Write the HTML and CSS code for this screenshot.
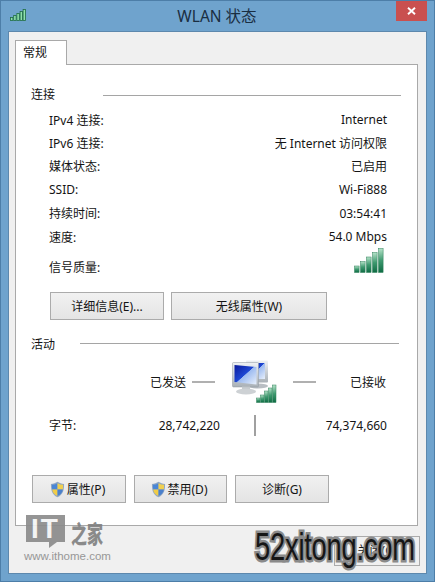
FILE: index.html
```html
<!DOCTYPE html>
<html lang="zh">
<head>
<meta charset="utf-8">
<title>WLAN 状态</title>
<link rel="stylesheet" href="styles.css">
</head>
<body>
<svg class="defs" width="0" height="0" aria-hidden="true">
  <defs>
    <linearGradient id="bar" x1="0" y1="0" x2="0" y2="1"><stop offset="0" stop-color="#b5e2c8"/><stop offset=".5" stop-color="#3f9a70"/><stop offset="1" stop-color="#0d6a42"/></linearGradient>
    <linearGradient id="screen" x1="0" y1="0" x2="1" y2="1"><stop offset="0" stop-color="#0a1a9c"/><stop offset=".48" stop-color="#1f48d4"/><stop offset=".5" stop-color="#9dbbf0"/><stop offset="1" stop-color="#e8f0fb"/></linearGradient>
    <linearGradient id="frame" x1="0" y1="0" x2="0" y2="1"><stop offset="0" stop-color="#eef1f4"/><stop offset="1" stop-color="#a9b0b6"/></linearGradient>
    <symbol id="shield" viewBox="0 0 16 18">
      <path d="M8 .7C6 2 3.6 2.800 1 3c0 6 .6 11 7 14.300C14.400 14 15 9 15 3c-2.600-.2-5-1-7-2.300z" fill="#8fa6c4"/>
      <path d="M8 2.200V9H2.300c-.2-1.500-.2-3-.2-5 2.100-.2 4.100-.8 5.900-1.800z" fill="#4a86d6"/>
      <path d="M8 2.200c1.800 1 3.800 1.600 5.900 1.800 0 2 0 3.500-.2 5H8z" fill="#f0d050"/>
      <path d="M2.300 9H8v7C4.200 14 2.800 12 2.300 9z" fill="#f0cc48"/>
      <path d="M8 9h5.700C13.200 12 11.800 14 8 16z" fill="#4a80cc"/>
    </symbol>
  </defs>
</svg>
<main class="window">
  <header class="titlebar">
    <svg class="title-icon" width="16" height="12" viewBox="0 0 16 12" aria-hidden="true">
      <g fill="#8fe0ac" stroke="#1f6b45" stroke-width=".8"><rect x=".5" y="8.500" width="2.400" height="3"/><rect x="3.700" y="6.500" width="2.400" height="5"/><rect x="6.900" y="4.500" width="2.400" height="7"/><rect x="10.100" y="2.500" width="2.400" height="9"/><rect x="13.100" y=".5" width="2.400" height="11"/></g>
    </svg>
    <h1 class="title">WLAN 状态</h1>
    <div class="close" aria-label="关闭">
      <svg width="9" height="8" viewBox="0 0 9 8" aria-hidden="true"><path d="M1 .8l7 6.400M8 .8L1 7.200" stroke="#fff" stroke-width="1.900"/></svg>
    </div>
  </header>
  <div class="client">
    <div class="tabs"><div class="tab">常规</div></div>
    <section class="panel">
      <div class="group-head head-connect"><span>连接</span><i class="rule rule-connect"></i></div>
      <div class="rows">
        <div class="row"><span>IPv4 连接:</span><span>Internet</span></div>
        <div class="row"><span>IPv6 连接:</span><span>无 Internet 访问权限</span></div>
        <div class="row"><span>媒体状态:</span><span>已启用</span></div>
        <div class="row"><span>SSID:</span><span>Wi-Fi888</span></div>
        <div class="row"><span>持续时间:</span><span>03:54:41</span></div>
        <div class="row"><span>速度:</span><span>54.0 Mbps</span></div>
        <div class="row row-signal"><span>信号质量:</span>
          <svg class="signal" width="30" height="25" viewBox="0 0 30 25" aria-hidden="true">
            <g fill="url(#bar)" stroke="#2d8059" stroke-width=".5"><rect x=".5" y="18" width="4.600" height="6.500"/><rect x="6.500" y="13.500" width="4.600" height="11"/><rect x="12.500" y="9" width="4.600" height="15.500"/><rect x="18.500" y="4.500" width="4.600" height="20"/><rect x="24.500" y=".5" width="4.600" height="24"/></g>
          </svg>
        </div>
      </div>
      <div class="actions">
        <button class="btn btn-details">详细信息(E)...</button>
        <button class="btn btn-wireless">无线属性(W)</button>
      </div>
      <div class="group-head head-activity"><span>活动</span><i class="rule rule-activity"></i></div>
      <div class="flow">
        <span class="flow-label">已发送</span><i class="dash"></i>
        <svg class="net" width="47" height="46" viewBox="0 0 47 46" aria-hidden="true">
          <rect x="14" y="1.500" width="22" height="22" rx="1" fill="url(#frame)"/>
          <rect x="17" y="4" width="16" height="16" fill="url(#screen)"/>
          <ellipse cx="26" cy="27" rx="10" ry="2.500" fill="#b9bec3"/>
          <rect x=".5" y="3.500" width="26" height="24.500" rx="1" fill="url(#frame)" stroke="#8f979e" stroke-width=".5"/>
          <path d="M2.500 6l22 2v17.500L2.500 23z" fill="url(#screen)"/>
          <rect x="10" y="27.500" width="8" height="4" fill="#c3c8cc"/>
          <ellipse cx="14" cy="32.500" rx="10" ry="3" fill="#cdd1d4"/>
          <g fill="url(#bar)" stroke="#2d8059" stroke-width=".5"><rect x="24.500" y="39" width="3.500" height="4.500"/><rect x="28.500" y="36" width="3.500" height="7.500"/><rect x="32.500" y="32" width="3.500" height="11.500"/><rect x="36.500" y="29" width="3.500" height="14.500"/><rect x="40.500" y="26" width="3.500" height="17.500"/></g>
        </svg>
        <i class="dash dash-right"></i><span class="flow-label flow-recv">已接收</span>
      </div>
      <div class="bytes">
        <span class="bytes-label">字节:</span>
        <span class="bytes-sent">28,742,220</span>
        <i class="divider"></i>
        <span class="bytes-recv">74,374,660</span>
      </div>
      <div class="actions actions-bottom">
        <button class="btn btn-props"><svg class="uac" aria-hidden="true"><use href="#shield"/></svg>属性(P)</button>
        <button class="btn btn-disable"><svg class="uac" aria-hidden="true"><use href="#shield"/></svg>禁用(D)</button>
        <button class="btn btn-diag">诊断(G)</button>
      </div>
    </section>
    <div class="footer"><div class="close-btn">关闭(C)</div></div>
  </div>
  <div class="mark-it">
    <div class="it-row"><div class="it-logo">IT<i class="it-tail"></i></div><div class="it-cn">之家</div></div>
    <div class="it-url">www.ithome.com</div>
  </div>
  <div class="mark-52">52xitong.com</div>
</main>
</body>
</html>
```
FILE: styles.css
```css
* { box-sizing: border-box; }
html, body { margin: 0; padding: 0; }
body {
  width: 435px;
  height: 582px;
  overflow: hidden;
  font-family: "Noto Sans", "Noto Sans CJK SC", sans-serif;
  font-size: 12px;
  color: #141414;
}
.defs { position: absolute; }
.window {
  position: relative;
  width: 435px;
  height: 582px;
  background: #6fa3cd;
  border: 1px solid #4d7ea8;
  padding: 0 7px 7px;
  display: flex;
  flex-direction: column;
}
.titlebar {
  height: 30px;
  flex: none;
  display: flex;
  align-items: flex-start;
  position: relative;
}
.title-icon { position: absolute; left: 2px; top: 8px; }
.title {
  margin: 0;
  flex: 1;
  text-align: center;
  font-size: 15.500px;
  line-height: 20px;
  padding-top: 5px;
  font-weight: 400;
  color: #1a2e42;
  padding-right: 1px;
}
.close {
  position: absolute;
  right: -7px;
  top: 0;
  width: 31px;
  height: 20px;
  margin-right: 7px;
  background: #c9504f;
  display: flex;
  align-items: center;
  justify-content: center;
}
.client {
  flex: 1;
  background: #f0f0f0;
  border: 1px solid #5d88ad;
  padding: 8px 9px 0 6px;
  display: flex;
  flex-direction: column;
}
.tabs { height: 24px; flex: none; display: flex; }
.tab {
  width: 52px;
  height: 25px;
  background: #fff;
  border: 1px solid #a9a9a9;
  border-bottom: 0;
  padding: 3px 0 0 7px;
  line-height: 18px;
  position: relative;
  z-index: 1;
}
.panel {
  width: 403px;
  height: 462px;
  flex: none;
  background: #fff;
  border: 1px solid #a9a9a9;
  position: relative;
}
.group-head {
  display: flex;
  align-items: center;
  padding-left: 15px;
  line-height: 18px;
}
.head-connect { margin-top: 21px; height: 18px; }
.rule { display: block; height: 1px; background: #a5a5a5; }
.rule-connect { margin-left: 48px; width: 298px; }
.rule-activity { margin-left: 25px; width: 319px; position: relative; top: -2px; }
.rows {
  padding: 4px 30px 0 33px;
  display: flex;
  flex-direction: column;
}
.row {
  height: 23.400px;
  display: flex;
  justify-content: space-between;
  align-items: center;
}
.row-signal { height: 38px; padding-right: 3px; }
.signal { margin-bottom: 14px; }
.actions { display: flex; gap: 7px; padding: 6px 0 0 34px; }
.btn {
  height: 28px;
  padding: 0;
  font: inherit;
  color: #141414;
  background: linear-gradient(#f1f1f1, #e4e4e4);
  border: 1px solid #ababab;
  display: inline-flex;
  align-items: center;
  justify-content: center;
}
.btn-details { width: 114px; }
.btn-wireless { width: 156px; }
.head-activity { margin-top: 16px; height: 18px; }
.flow {
  display: flex;
  align-items: center;
  height: 46px;
  margin-top: 5px;
  padding-left: 134px;
}
.flow-label { width: 37px; }
.flow-recv { margin-left: 34px; }
.dash { display: block; width: 23px; height: 2px; background: #b0b0b0; margin-left: 5px; }
.dash-right { margin-left: 14px; }
.net { margin-left: 17px; flex: none; }
.bytes {
  display: flex;
  align-items: center;
  height: 24px;
  margin-top: 8px;
  padding-left: 33px;
}
.bytes-label { width: 60px; }
.bytes-sent { width: 111px; text-align: right; }
.divider { display: block; width: 2px; height: 21px; background: #a0a0a0; margin-left: 34px; }
.bytes-recv { width: 131px; text-align: right; }
.actions-bottom { gap: 8px; padding: 38px 0 0 16px; }
.btn-props { width: 94px; }
.btn-disable { width: 93px; }
.btn-diag { width: 94px; }
.uac { width: 15px; height: 17px; margin-right: 2px; margin-left: -3px; }
.footer { flex: 1; position: relative; }
.close-btn {
  position: absolute;
  left: 319px;
  top: 10px;
  width: 86px;
  height: 30px;
  background: #f0f0f0;
  border: 1px solid #ababab;
  text-align: center;
  line-height: 28px;
}
.mark-it {
  position: absolute;
  left: 23px;
  top: 514px;
  color: #8b8b8b;
  display: flex;
  flex-direction: column;
  opacity: .9;
}
.it-row { display: flex; align-items: flex-start; padding-left: 2px; }
.it-logo {
  width: 39px;
  height: 27px;
  background: #8a8a8a;
  color: #f4f4f4;
  font-family: "Liberation Sans", sans-serif;
  font-weight: 700;
  font-size: 28px;
  line-height: 27px;
  letter-spacing: 2px;
  text-align: center;
  position: relative;
}
.it-tail {
  position: absolute;
  left: 23px;
  top: 27px;
  border-style: solid;
  border-width: 6px 8px 0 0;
  border-color: #8a8a8a transparent transparent transparent;
}
.it-cn {
  margin-left: 6px;
  font-family: "Noto Sans CJK SC", sans-serif;
  font-weight: 900;
  font-size: 16px;
  line-height: 20px;
  color: #7f7f7f;
  transform: scaleY(1.500);
  transform-origin: top left;
  margin-top: 2px;
}
.it-url {
  margin-top: 6px;
  font-family: "Liberation Sans", sans-serif;
  font-size: 11.500px;
  line-height: 16px;
  color: #8e8e8e;
}
.mark-52 {
  position: absolute;
  left: 254px;
  top: 524px;
  font-family: "Liberation Sans", sans-serif;
  font-size: 39px;
  line-height: 44px;
  letter-spacing: -.3px;
  color: #161616;
  -webkit-text-stroke: 5px #8a8a8a;
  paint-order: stroke fill;
  white-space: nowrap;
  transform: scaleX(.7);
  transform-origin: left top;
}
```
